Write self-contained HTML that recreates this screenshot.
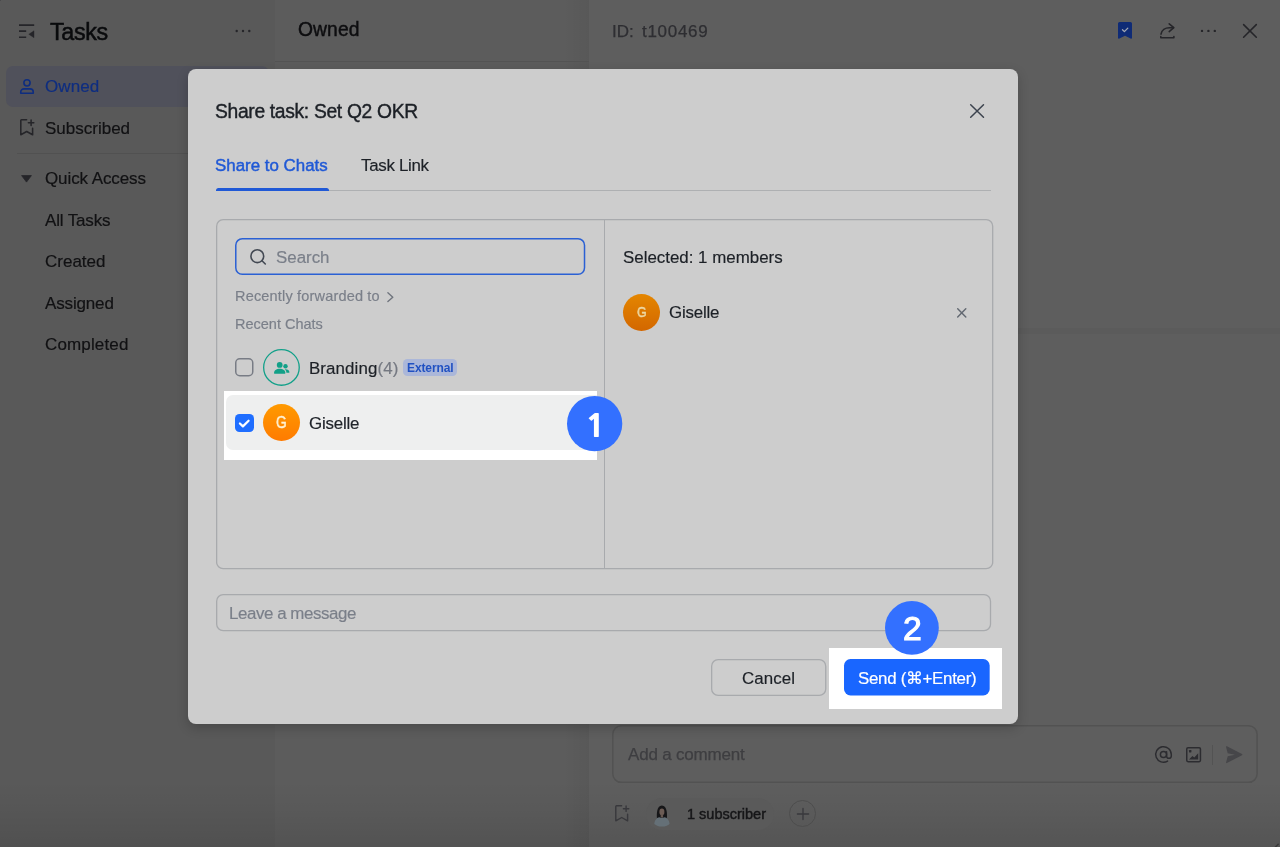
<!DOCTYPE html>
<html lang="en">
<head>
<meta charset="utf-8">
<title>Share task: Set Q2 OKR</title>
<style>
html,body{margin:0;padding:0;}
body{width:1280px;height:847px;overflow:hidden;position:relative;background:#5e5e5e;
  font-family:"Liberation Sans","DejaVu Sans",sans-serif;color:#1c1c1e;}
.abs{position:absolute;}
.t{position:absolute;white-space:nowrap;line-height:1;will-change:transform;}
svg{position:absolute;overflow:visible;}
.box{position:absolute;box-sizing:border-box;border:1px solid #a8aaad;border-radius:7px;}
#sidebar{left:0;top:0;width:275px;height:847px;background:#595959;}
#mid{left:275px;top:0;width:314px;height:847px;background:#5c5c5c;}
#midshade{left:563px;top:0;width:26px;height:847px;background:linear-gradient(to right,rgba(0,0,0,0),rgba(0,0,0,0.045));}
#right{left:589px;top:0;width:691px;height:847px;background:#5e5e5e;}
#botgrad{left:0;top:780px;width:1280px;height:67px;background:linear-gradient(to bottom,rgba(0,0,0,0) 0%,rgba(0,0,0,0.03) 40%,rgba(0,0,0,0.10) 100%);}
#selrow{left:6px;top:66px;width:263px;height:40.5px;border-radius:7px;background:#50515b;}
#modal{left:188px;top:69px;width:830px;height:654.5px;border-radius:8px;background:#cdcdcd;
  box-shadow:0 4px 12px rgba(0,0,0,0.20);}
.spot{position:absolute;background:#fff;overflow:hidden;}
.num{position:absolute;border-radius:50%;background:#3370ff;}
</style>
</head>
<body>
<div class="abs" id="sidebar"></div>
<div class="abs" id="mid"></div>
<div class="abs" id="midshade"></div>
<div class="abs" id="right"></div>
<div class="abs" id="botgrad"></div>

<!-- sidebar -->
<svg style="left:19px;top:24px" width="16" height="15" viewBox="0 0 16 15"><path d="M0 1.1h15.2M0 7.1h7.2M0 13.2h7.2" stroke="#252529" stroke-width="1.6" fill="none"/><path d="M15 6.800v6.900L9.800 10.250z" fill="#252529" stroke="#252529" stroke-width="0.4" stroke-linejoin="round"/></svg>
<div class="t" id="tasks" style="left:49.90px;top:21.00px;font-size:23.3px;color:#0a0b0d;letter-spacing:-0.35px;-webkit-text-stroke:0.5px #0a0b0d;">Tasks</div>
<svg style="left:235px;top:29px" width="16" height="4" viewBox="0 0 16 4"><g fill="#252529"><circle cx="1.7" cy="2" r="1.2"/><circle cx="8" cy="2" r="1.2"/><circle cx="14.3" cy="2" r="1.2"/></g></svg>
<div class="abs" id="selrow"></div>
<svg style="left:19.6px;top:78.75px" width="14" height="15" viewBox="0 0 14 15"><g stroke="#0e2d80" stroke-width="1.6" fill="none"><circle cx="7" cy="3.85" r="3.1"/><path d="M0.75 14.25v-1.2a3.2 3.2 0 0 1 3.2-3.2h6.1a3.2 3.2 0 0 1 3.2 3.2v1.2z" stroke-linejoin="round"/></g></svg>
<div class="t" id="s_owned" style="left:44.90px;top:78.00px;font-size:17px;color:#0e2d80;letter-spacing:0.1px;-webkit-text-stroke:0.18px #0e2d80;">Owned</div>
<svg style="left:19.6px;top:119.4px" width="14.5" height="17" viewBox="0 0 14.5 17"><g stroke="#252529" stroke-width="1.55" fill="none" stroke-linejoin="round" stroke-linecap="round"><path d="M6.6 0.8H1.5a0.7 0.7 0 0 0-0.7 0.7v14.3l5.9-3.3 5.9 3.3V9.2"/><path d="M11.1 1v5.4M8.4 3.7h5.4"/></g></svg>
<div class="t" id="s_sub" style="left:44.60px;top:120.00px;font-size:17px;color:#111113;-webkit-text-stroke:0.18px #111113;">Subscribed</div>
<div class="abs" style="left:17px;top:152.5px;width:253px;height:1px;background:#515151;"></div>
<svg style="left:21px;top:175px" width="11" height="8" viewBox="0 0 11 8"><path d="M0.6 0.6h9.8L5.5 7.1z" fill="#252529" stroke="#252529" stroke-width="0.8" stroke-linejoin="round"/></svg>
<div class="t" id="s_qa" style="left:44.80px;top:170.00px;font-size:17px;color:#111113;letter-spacing:-0.1px;-webkit-text-stroke:0.18px #111113;">Quick Access</div>
<div class="t" id="s_all" style="left:45.20px;top:212.00px;font-size:17px;color:#111113;letter-spacing:-0.15px;-webkit-text-stroke:0.18px #111113;">All Tasks</div>
<div class="t" id="s_cre" style="left:44.50px;top:253.00px;font-size:17px;color:#111113;-webkit-text-stroke:0.18px #111113;">Created</div>
<div class="t" id="s_ass" style="left:45.20px;top:295.00px;font-size:17px;color:#111113;letter-spacing:-0.15px;-webkit-text-stroke:0.18px #111113;">Assigned</div>
<div class="t" id="s_com" style="left:44.50px;top:336.00px;font-size:17px;color:#111113;letter-spacing:0.15px;-webkit-text-stroke:0.18px #111113;">Completed</div>
<!-- middle column -->
<div class="t" id="m_owned" style="left:298.20px;top:20.00px;font-size:19.3px;color:#0e0e10;letter-spacing:0.1px;-webkit-text-stroke:0.45px #0e0e10;">Owned</div>
<div class="abs" style="left:275px;top:61px;width:314px;height:1px;background:#535353;"></div>
<!-- right panel -->
<div class="t" id="r_id" style="left:612.40px;top:23.00px;font-size:17px;color:#2e2e32;-webkit-text-stroke:0.25px #2e2e32;">ID:</div>
<div class="t" id="r_id2" style="left:641.90px;top:23.00px;font-size:17px;color:#2e2e32;letter-spacing:0.7px;-webkit-text-stroke:0.25px #2e2e32;">t100469</div>
<svg style="left:1118.3px;top:22.3px" width="14" height="17" viewBox="0 0 14 17"><path d="M1.6 0h10.8A1.6 1.6 0 0 1 14 1.6V15.700a1 1 0 0 1-1.400 0.900L7 13.800 1.400 16.600A1 1 0 0 1 0 15.700V1.600A1.600 1.600 0 0 1 1.600 0z" fill="#0f2b76"/><path d="M4.500 7.700l1.900 1.900 3.400-3.500" stroke="#a4a8b2" stroke-width="1.300" fill="none" stroke-linecap="round" stroke-linejoin="round"/></svg>
<svg style="left:1159.8px;top:23px" width="15" height="16" viewBox="0 0 15 16"><g stroke="#252529" stroke-width="1.55" fill="none" stroke-linecap="round" stroke-linejoin="round"><path d="M9.2 0.8l4.6 3.9-4.6 3.9"/><path d="M13.4 4.7H9.5C5.2 4.7 1.6 7.3 1 11.2"/><path d="M0.8 13.4v1.3h13.1v-1.3"/></g></svg>
<svg style="left:1200px;top:29px" width="16" height="4" viewBox="0 0 16 4"><g fill="#252529"><circle cx="2" cy="1.9" r="1.2"/><circle cx="8.4" cy="1.9" r="1.2"/><circle cx="14.8" cy="1.9" r="1.2"/></g></svg>
<svg style="left:1243.2px;top:24px" width="14" height="14" viewBox="0 0 14 14"><path d="M0.6 0.6l12.7 12.7M13.3 0.6L0.6 13.3" stroke="#252529" stroke-width="1.55" fill="none" stroke-linecap="round"/></svg>
<div class="abs" style="left:589px;top:328px;width:691px;height:5.5px;background:#5b5b5b;"></div>
<svg style="left:612px;top:725.2px" width="645.9" height="58.1" viewBox="0 0 645.9 58.1"><rect x="0.75" y="0.75" width="644.4" height="56.6" rx="8.5" ry="8.5" fill="none" stroke="#525252" stroke-width="1.5"/></svg>
<div class="t" id="r_add" style="left:627.70px;top:746.00px;font-size:17px;color:#3e3e41;letter-spacing:-0.2px;-webkit-text-stroke:0.25px #3e3e41;">Add a comment</div>
<svg style="left:1155px;top:746px" width="17.2" height="17" viewBox="0 0 17.2 17"><g stroke="#2c2c30" stroke-width="1.45" fill="none" stroke-linecap="round"><circle cx="8.5" cy="8.5" r="3.1"/><path d="M11.6 5.6v4.3a2.35 2.35 0 0 0 4.7 0V8.5A7.8 7.8 0 1 0 12.6 15.1"/></g></svg>
<svg style="left:1185.9px;top:747px" width="15.2" height="15.4" viewBox="0 0 15.2 15.4"><rect x="0.75" y="0.75" width="13.7" height="13.9" rx="1.3" stroke="#2c2c30" stroke-width="1.5" fill="none"/><rect x="3" y="3" width="2.4" height="2.4" rx="0.4" fill="#2c2c30"/><path d="M3 12.4l3.4-3.5 1.9 1.6 3.9-4.3v6.2z" fill="#2c2c30"/></svg>
<div class="abs" style="left:1211.8px;top:744.5px;width:1px;height:20.5px;background:#535353;"></div>
<svg style="left:1225.7px;top:746px" width="16.5" height="17.4" viewBox="0 0 16.5 17.4"><path d="M0.9 0.3L16 8.1a0.7 0.7 0 0 1 0 1.2L0.9 17.1a0.6 0.6 0 0 1-0.85-0.7L1.7 10.2l7.2-1.5-7.2-1.5L0.05 1A0.6 0.6 0 0 1 0.9 0.3z" fill="#464649"/></svg>
<svg style="left:614.8px;top:804.9px" width="14.5" height="17" viewBox="0 0 14.5 17"><g stroke="#38383c" stroke-width="1.4" fill="none" stroke-linejoin="round" stroke-linecap="round"><path d="M6.6 0.8H1.5a0.7 0.7 0 0 0-0.7 0.7v14.3l5.9-3.3 5.9 3.3V9.2"/><path d="M11.1 1v5.4M8.4 3.7h5.4"/></g></svg>
<div class="abs" style="left:645.8px;top:797.6px;width:128.7px;height:32.4px;border-radius:16.2px;background:#5a5a5a;"></div>
<svg style="left:649.5px;top:801.8px" width="24" height="24" viewBox="0 0 24 24"><defs><clipPath id="avc"><circle cx="12" cy="12" r="12.6"/></clipPath></defs><g clip-path="url(#avc)"><path d="M7.300 19.500C6.200 13 6.600 3.500 11.900 3.500s5.700 9.500 4.600 16z" fill="#161618"/><ellipse cx="11.900" cy="9.900" rx="2.500" ry="3.300" fill="#6c5c55"/><path d="M10.700 12.600h2.400v3h-2.400z" fill="#65564f"/><path d="M4 26c0-6.800 1.800-10.200 5.600-10.700 0.800 0.800 3.800 0.800 4.600 0 3.800 0.500 5.800 3.900 5.800 10.700z" fill="#657077"/></g></svg>
<div class="t" id="r_subs" style="left:686.70px;top:807.00px;font-size:14.5px;color:#161618;-webkit-text-stroke:0.45px #161618;">1 subscriber</div>
<div class="abs" style="left:789px;top:800.2px;width:27px;height:27px;box-sizing:border-box;border:1px solid #4d4d4d;border-radius:50%;"></div>
<svg style="left:796.5px;top:807.7px" width="12" height="12" viewBox="0 0 12 12"><path d="M6 0.4v11.2M0.4 6h11.2" stroke="#38383c" stroke-width="1.3" fill="none" stroke-linecap="round"/></svg>
<div class="abs" style="left:0;top:0;width:1px;height:1px;background:#4a4a4c;"></div>
<svg style="left:1274px;top:841px" width="6" height="6" viewBox="0 0 6 6"><path d="M1.5 6L4.200 3.300" stroke="#3a3a3a" stroke-width="1.6" fill="none" stroke-linecap="round"/></svg>
<!-- modal -->
<div class="abs" id="modal"></div>
<div class="t" id="title" style="left:215.30px;top:102.00px;font-size:19.3px;color:#1c2026;letter-spacing:-0.33px;-webkit-text-stroke:0.4px #1c2026;">Share task: Set Q2 OKR</div>
<svg style="left:969.75px;top:103.7px" width="14.2" height="14" viewBox="0 0 14.2 14"><path d="M0.7 0.7l12.8 12.6M13.5 0.7L0.7 13.3" stroke="#3c434e" stroke-width="1.5" fill="none" stroke-linecap="round"/></svg>
<div class="t" id="tab1" style="left:215.20px;top:158.00px;font-size:16.9px;color:#2059d6;-webkit-text-stroke:0.45px #2059d6;">Share to Chats</div>
<div class="t" id="tab2" style="left:361.00px;top:158.00px;font-size:16.9px;color:#1c2026;letter-spacing:-0.3px;-webkit-text-stroke:0.18px #1c2026;">Task Link</div>
<div class="abs" style="left:216px;top:190px;width:774.5px;height:1px;background:#aeb0b2;"></div>
<div class="abs" style="left:215.8px;top:187.8px;width:113px;height:3.4px;background:#2059d6;border-radius:2.5px 2.5px 0 0;"></div>
<svg style="left:215.6px;top:218.6px" width="777.35" height="350.3" viewBox="0 0 777.35 350.3"><rect x="0.65" y="0.65" width="776.0500000000001" height="349.0" rx="6.5" ry="6.5" fill="none" stroke="#a8aaad" stroke-width="1.3"/></svg>
<div class="abs" style="left:603.65px;top:219.5px;width:1.3px;height:348.6px;background:#a8aaad;"></div>
<svg style="left:235px;top:238.3px" width="350.3" height="37.1" viewBox="0 0 350.3 37.1"><rect x="0.75" y="0.75" width="348.8" height="35.6" rx="6.5" ry="6.5" fill="none" stroke="#2a60d4" stroke-width="1.5"/></svg>
<svg style="left:249.9px;top:248.7px" width="16" height="15.6" viewBox="0 0 16 15.6"><g stroke="#434953" stroke-width="1.6" fill="none" stroke-linecap="round"><circle cx="7.3" cy="7.2" r="6.4"/><path d="M12 11.800l3.300 3.200"/></g></svg>
<div class="t" id="searchtx" style="left:276.00px;top:250.00px;font-size:16.9px;color:#7a7f89;-webkit-text-stroke:0.18px #7a7f89;">Search</div>
<div class="t" id="rft" style="left:235.00px;top:289.00px;font-size:14.5px;color:#7a7f89;letter-spacing:0.18px;-webkit-text-stroke:0.18px #7a7f89;">Recently forwarded to</div>
<svg style="left:387.4px;top:291.5px" width="7" height="10.4" viewBox="0 0 7 10.4"><path d="M0.9 0.8l4.9 4.4-4.900 4.400" stroke="#6f747d" stroke-width="1.4" fill="none" stroke-linecap="round" stroke-linejoin="round"/></svg>
<div class="t" id="rc" style="left:235.00px;top:317.00px;font-size:14.5px;color:#7a7f89;-webkit-text-stroke:0.18px #7a7f89;">Recent Chats</div>
<svg style="left:235.1px;top:358.1px" width="18.5" height="18.5" viewBox="0 0 18.5 18.5"><rect x="0.75" y="0.75" width="17.0" height="17.0" rx="4" ry="4" fill="none" stroke="#787c85" stroke-width="1.5"/></svg>
<svg style="left:263px;top:349.1px" width="36.9" height="36.9" viewBox="0 0 36.9 36.9"><rect x="0.65" y="0.65" width="35.6" height="35.6" rx="18.45" ry="18.45" fill="none" stroke="#12a089" stroke-width="1.3"/></svg>
<svg style="left:273.9px;top:361.7px" width="15.4" height="11.7" viewBox="0 0 15.4 11.7"><g fill="#12a088"><circle cx="5.7" cy="2.9" r="2.9"/><path d="M0 11.1C0 8.4 2.300 6.700 5.700 6.700S11.400 8.400 11.400 11.100a0.600 0.600 0 0 1-0.600 0.600H0.600A0.600 0.600 0 0 1 0 11.100z"/><circle cx="11.5" cy="4.3" r="2.2"/><path d="M11.500 7.200c2.300 0 3.900 1.200 3.900 3.100a0.500 0.500 0 0 1-0.500 0.500h-2.500c0-1.500-0.600-2.700-1.700-3.500a4 4 0 0 1 0.800-0.100z"/></g></svg>
<div class="t" id="brand" style="left:308.60px;top:361.00px;font-size:16.9px;color:#1c2026;letter-spacing:0.1px;-webkit-text-stroke:0.18px #1c2026;">Branding<span style="color:#747881;-webkit-text-stroke-color:#747881">(4)</span></div>
<div class="abs" style="left:402.7px;top:359px;width:54.4px;height:17px;border-radius:4.5px;background:#abb7d9;"></div>
<div class="t" id="ext" style="left:407.00px;top:362.00px;font-size:12px;color:#2151c2;letter-spacing:-0.1px;font-weight:bold;">External</div>
<div class="t" id="sel" style="left:622.90px;top:250.00px;font-size:16.9px;color:#1c2026;-webkit-text-stroke:0.18px #1c2026;">Selected: 1 members</div>
<div class="abs" style="left:623.1px;top:293.7px;width:37.1px;height:37.1px;border-radius:50%;background:linear-gradient(to bottom,#e48600,#d36700);"></div>
<div class="t" id="g2" style="left:637.20px;top:304.00px;font-size:15.0px;color:#ecd9a6;-webkit-text-stroke:0.55px #ecd9a6;transform:scaleX(0.82);transform-origin:0 0;">G</div>
<div class="t" id="gis2" style="left:668.90px;top:305.00px;font-size:16.9px;color:#1c2026;letter-spacing:-0.2px;-webkit-text-stroke:0.18px #1c2026;">Giselle</div>
<svg style="left:956.9px;top:308px" width="9.5" height="9.7" viewBox="0 0 9.5 9.7"><path d="M0.7 0.7l8.1 8.300M8.800 0.700L0.700 9" stroke="#626871" stroke-width="1.4" fill="none" stroke-linecap="round"/></svg>
<svg style="left:215.6px;top:594.2px" width="775.2" height="37.3" viewBox="0 0 775.2 37.3"><rect x="0.65" y="0.65" width="773.9000000000001" height="36.0" rx="6.5" ry="6.5" fill="none" stroke="#a8aaad" stroke-width="1.3"/></svg>
<div class="t" id="msgtx" style="left:229.00px;top:606.00px;font-size:16.9px;color:#7a7f89;letter-spacing:-0.43px;-webkit-text-stroke:0.18px #7a7f89;">Leave a message</div>
<svg style="left:710.7px;top:659px" width="115.4" height="37.1" viewBox="0 0 115.4 37.1"><rect x="0.65" y="0.65" width="114.10000000000001" height="35.800000000000004" rx="6.5" ry="6.5" fill="none" stroke="#a8aaad" stroke-width="1.3"/></svg>
<div class="t" id="canceltx" style="left:742.30px;top:671.00px;font-size:16.9px;color:#1c2026;letter-spacing:0.1px;-webkit-text-stroke:0.18px #1c2026;">Cancel</div>
<!-- spotlights -->
<div class="spot" id="spot1" style="left:224px;top:391px;width:373.2px;height:68.8px;"><div class="abs" style="left:2.1px;top:3.8px;width:380px;height:55.4px;border-radius:7px;background:#eeefef;"></div></div>
<div class="abs" style="left:235.1px;top:413.5px;width:18.5px;height:18.5px;border-radius:4.5px;background:#1f6eff;"></div>
<svg style="left:235.1px;top:413.5px" width="18.5" height="18.5" viewBox="0 0 18.5 18.5"><path d="M4.900 9.500l3 2.900 5.700-5.700" stroke="#fff" stroke-width="2.2" fill="none" stroke-linecap="round" stroke-linejoin="round"/></svg>
<div class="abs" style="left:263px;top:404.1px;width:37px;height:37.2px;border-radius:50%;background:linear-gradient(to bottom,#ff9a00,#ff7b00);"></div>
<div class="t" id="g1" style="left:275.70px;top:415.00px;font-size:16.6px;color:#fff3d6;-webkit-text-stroke:0.55px #fff3d6;transform:scaleX(0.82);transform-origin:0 0;">G</div>
<div class="t" id="gis1" style="left:308.80px;top:416.00px;font-size:16.9px;color:#20242a;letter-spacing:-0.2px;-webkit-text-stroke:0.18px #20242a;">Giselle</div>
<div class="spot" id="spot2" style="left:829.2px;top:648px;width:172.6px;height:60.8px;"></div>
<svg style="left:844.4px;top:659.2px" width="145.7" height="36.4" viewBox="0 0 145.7 36.4"><rect x="0" y="0" width="145.7" height="36.4" rx="6.5" fill="#1966ff"/></svg>
<div class="t" id="sendtx" style="left:858.00px;top:671.00px;font-size:16.9px;color:#ffffff;letter-spacing:-0.3px;-webkit-text-stroke:0.18px #ffffff;">Send (&#8984;+Enter)</div>
<svg style="left:566.8px;top:396.4px" width="55.3" height="55.3" viewBox="0 0 55.3 55.3"><circle cx="27.65" cy="27.65" r="27.65" fill="#3370ff"/></svg>
<div class="t" id="n1" style="left:584.70px;top:411.00px;font-size:30.8px;color:#ffffff;font-weight:800;font-family:'NanumGothic','Liberation Sans',sans-serif;transform:scaleX(1.14);transform-origin:0 0;">1</div>
<svg style="left:885.4px;top:600.8px" width="53.8" height="53.8" viewBox="0 0 53.8 53.8"><circle cx="26.9" cy="26.9" r="26.9" fill="#3370ff"/></svg>
<div class="t" id="n2" style="left:903.10px;top:613.00px;font-size:32.4px;color:#ffffff;-webkit-text-stroke:1.1px #ffffff;transform:scaleX(1.04);transform-origin:0 0;">2</div>
</body>
</html>
